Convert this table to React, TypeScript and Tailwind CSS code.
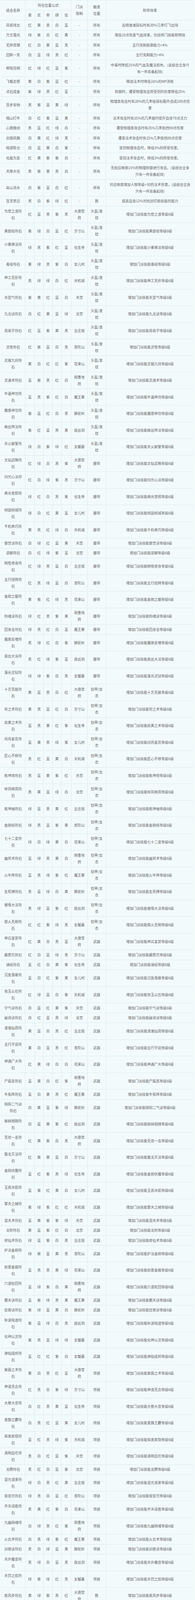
const cell = "border border-[#dcebef] py-[3.75px] text-center align-middle font-normal";
const nameCell = cell + " px-[5px]";
const colorCell = cell + " px-0";
const sectCell = cell + " px-[5px]";
const effectCell = cell + " px-2";

type Row = { name: string; colors: string; sect: string; pos: string; effect: string };

// 通用组合：[名称, 五个位置, 触发位置, 效果]
const basic: [string, string, string, string][] = [
  ["风卷残云", "红黄黑白蓝", "所有", "击倒鬼魂目标时有20%几率打飞出场"],
  ["万丈霞光", "绿紫白红黄", "所有", "增加10点恢复气血效果，包括师门技能和特技"],
  ["无所畏惧", "红白黄蓝黑", "所有", "五行克制抵御能力+4%"],
  ["回眸一笑", "白蓝绿黑红", "所有", "五行克制能力+4%"],
  ["柳暗花明", "红绿红蓝紫", "所有", "中毒时降低25%的气血及魔法损失。(该组合全身只有一件装备起效)"],
  ["飞檐走壁", "黄白紫蓝红", "所有", "释放法术时降低16%的MP消耗"],
  ["点石成金", "紫绿黑红蓝", "所有", "防御时，遭受物理攻击所受到的伤害降低25%"],
  ["百步穿杨", "黑紫蓝黄绿", "所有", "物理类攻击时有20%的几率给目标额外造成100点伤害"],
  ["隔山打牛", "白红紫蓝黄", "所有", "法术攻击时有25%的几率临时提升自身70点灵力"],
  ["心随我动", "黑蓝红绿白", "所有", "遭受物理类攻击时有25%几率抵挡90点伤害"],
  ["云随风舞", "白黄红绿黑", "所有", "遭受法术攻击时有25%几率抵挡80点伤害"],
  ["暗渡陈仓", "白蓝黄白紫", "所有", "受到物理攻击时，降低3%的所受伤害。"],
  ["化敌为友", "红黄紫紫白", "所有", "受到法术攻击时，降低3%的所受伤害。"],
  ["天降大任", "黑紫黄黑白", "所有", "无视召唤兽15%的物理防御进行攻击。(该组合全身只有一件装备起效)"],
  ["高山流水", "白紫蓝白红", "所有", "对召唤兽增加人物等级+30的法术伤害。(该组合全身只有一件装备起效)"],
  ["百无禁忌", "黑白紫绿红", "靴", "提高自身12%对抗封印类技能的能力"],
];

// 门派符石：按触发位置分组，"技能 五色 门派"
const groups: { pos: string; list: string[] }[] = [
  {
    pos: "头盔/发钗",
    list: [
      "为官之道 红蓝黑紫黑 大唐官府",
      "黄庭经 紫绿白蓝红 方寸山",
      "小乘佛法 绿黑紫红蓝 化生寺",
      "毒经 黄绿黑紫白 女儿村",
      "神工无形 黑绿绿白红 天机城",
      "天罡气 紫黄红蓝白 天宫",
      "九龙诀 白红黄蓝绿 龙宫",
      "周易学 红蓝紫黄黑 五庄观",
      "灵性 红紫蓝白黑 普陀山",
      "灵猴九窍 黄白红红紫 花果山",
      "灵通术 蓝紫黑红白 阴曹地府",
      "牛逼神功 蓝黑紫红白 魔王寨",
      "魔兽神功 紫蓝红白黑 狮驼岭",
      "蛛丝阵法 紫红蓝黑黄 盘丝洞",
      "天火献誓 绿白紫绿红 女魃墓",
    ],
  },
  {
    pos: "腰带",
    list: [
      "文韬武略 红绿白黑紫 大唐官府",
      "归元心法 红白绿紫黑 方寸山",
      "佛光普照 绿红白黑紫 化生寺",
      "倾国倾城 绿白红黄蓝 女儿村",
      "千机奇巧 黄黑红绿白 天机城",
      "傲世诀 白绿红蓝黄 天宫",
      "逆鳞 白红绿紫蓝 龙宫",
      "明性修身 红绿黑蓝白 五庄观",
      "五行扭转 红黑绿蓝白 普陀山",
      "金刚之躯 黄紫红绿黑 花果山",
      "拘魂诀 绿红黑紫黄 阴曹地府",
      "回身击 绿黑红白蓝 魔王寨",
      "魔兽反嗜 黑绿红白紫 狮驼岭",
      "盘丝大法 黑红绿紫蓝 盘丝洞",
      "藻光灵狱 绿绿紫白黑 女魃墓",
    ],
  },
  {
    pos: "铠甲/女衣",
    list: [
      "十方无敌 黄蓝黑白红 大唐官府",
      "符之术 黄黑蓝红白 方寸山",
      "歧黄之术 蓝黑黄红紫 化生寺",
      "闭月羞花 蓝黄黑绿紫 女儿村",
      "匠心不移 黑红蓝黄白 天机城",
      "乾坤塔 黑蓝黄紫红 天宫",
      "呼风唤雨 黑黄蓝绿白 龙宫",
      "乾坤袖 绿蓝黑黄红 五庄观",
      "金刚经 绿黑蓝紫黄 普陀山",
      "七十二变 绿白绿黄白 花果山",
      "幽冥术 蓝绿黑黄白 阴曹地府",
      "火牛阵 蓝黑绿紫红 魔王寨",
      "生死搏 黑蓝绿白黄 狮驼岭",
      "催情大法 黑绿蓝紫红 盘丝洞",
      "煌火无明 红红紫绿黑 女魃墓",
    ],
  },
  {
    pos: "武器",
    list: [
      "神兵鉴赏 红黄白黑蓝 大唐官府",
      "霹雳咒 红白蓝绿黑 方寸山",
      "诵经 蓝红白黄紫 化生寺",
      "沉鱼落雁 蓝白红紫黄 女儿村",
      "攻玉以石 红绿蓝白紫 天机城",
      "宁气诀 白蓝红黄紫 天宫",
      "破浪诀 白红蓝黑绿 龙宫",
      "潇湘仙雨 黄蓝白黑红 五庄观",
      "五行学说 黄白蓝黑红 普陀山",
      "神通广大 红黄绿白白 花果山",
      "尸腐恶 蓝黄白红紫 阴曹地府",
      "牛虱阵 蓝白黄黑红 魔王寨",
      "阴阳二气诀 白黄蓝紫绿 狮驼岭",
      "姊妹相随 白蓝黄紫红 盘丝洞",
      "无双一击 红黄紫白黑 大唐官府",
      "磐龙灭法 红紫黄蓝白 方寸山",
      "金刚伏魔 蓝红紫黑绿 化生寺",
      "玉质冰肌 蓝紫红黄白 女儿村",
      "擎天之械 紫绿紫红红 天机城",
      "混天术 蓝黄紫紫绿 天宫",
      "龙附 黄蓝紫红白 龙宫",
      "修仙术 绿蓝紫白黑 五庄观",
      "护法金刚 绿紫蓝黄黑 普陀山",
      "如意金箍 蓝黑黑黄绿 花果山",
      "六道轮回 蓝绿紫白黄 阴曹地府",
      "震天诀 蓝紫绿黑黄 魔王寨",
      "狂兽诀 紫绿蓝黄白 狮驼岭",
      "秋波暗送 紫蓝绿白黑 盘丝洞",
      "化神以灵 紫黑蓝绿绿 女魃墓",
      "弹指成烬 蓝红红紫白 女魃墓",
    ],
  },
  {
    pos: "项链",
    list: [
      "紫薇之术 黄白黑红蓝 大唐官府",
      "神道无念 红黑白紫绿 方寸山",
      "大慈大悲 白红黑黄蓝 化生寺",
      "香飘兰麝 白黑红蓝黄 女儿村",
      "探奥索隐 蓝红黑绿紫 天机城",
      "清明自在 黑白红蓝紫 天宫",
      "龙腾 黑红白蓝紫 龙宫",
      "混元道果 绿白黑红黄 五庄观",
      "观音咒 绿黑白蓝红 普陀山",
      "齐天逞胜 黑黄红紫白 花果山",
      "九幽阴魂 白绿黑红紫 阴曹地府",
      "火云术 白黑绿紫红 魔王寨",
      "训兽诀 黑白绿蓝黄 狮驼岭",
      "天外魔音 黑绿白蓝黑 盘丝洞",
      "天罚之焰 绿紫绿红黑 女魃墓",
    ],
  },
  {
    pos: "靴",
    list: [
      "疾风步 黄绿紫黑红 大唐官府",
      "斜月步 黄紫绿黑白 方寸山",
      "渡世步 绿黄紫蓝黑 化生寺",
      "清歌妙舞 绿紫黄红蓝 女儿村",
      "运思如电 黑白黄黄黑 天机城",
      "云霄步 紫绿黄蓝黑 天宫",
      "游龙术 紫黄绿红黑 龙宫",
      "七星遁 红绿紫白蓝 五庄观",
      "莲花宝座 红紫绿黑蓝 普陀山",
      "腾云驾雾 黑黄黑红黄 花果山",
      "无常步 绿红紫黑黄 阴曹地府",
      "裂石步 绿紫红蓝黄 魔王寨",
      "大鹏展翅 紫绿红白蓝 狮驼岭",
    ],
  },
];

const rows: Row[] = [
  ...basic.map(([name, colors, pos, effect]) => ({ name, colors, sect: "-", pos, effect })),
  ...groups.flatMap((g) =>
    g.list.map((line) => {
      const [skill, colors, sect] = line.split(" ");
      return {
        name: skill + "符石",
        colors,
        sect,
        pos: g.pos,
        effect: "增加门派技能" + skill + "等级6级",
      };
    })
  ),
];

export default function App() {
  return (
    <div className="bg-white font-['Noto_Sans_CJK_SC',sans-serif]">
      <table className="ml-[2px] w-[495px] table-fixed border-collapse bg-[#f3fafc] text-[9px] leading-[17px] text-[#666]">
        <colgroup>
          <col className="w-[62px]" />
          <col className="w-[24px]" />
          <col className="w-[23px]" />
          <col className="w-[23px]" />
          <col className="w-[23px]" />
          <col className="w-[25px]" />
          <col className="w-[42px]" />
          <col className="w-[47px]" />
          <col className="w-[226px]" />
        </colgroup>
        <thead>
          <tr>
            <th rowSpan={2} className={nameCell}>
              组合名称
            </th>
            <th colSpan={5} className={colorCell}>
              符石位置公式
            </th>
            <th rowSpan={2} className={sectCell}>
              门派
              <br />
              限制
            </th>
            <th rowSpan={2} className={sectCell}>
              触发
              <br />
              位置
            </th>
            <th rowSpan={2} className={effectCell}>
              附带效果
            </th>
          </tr>
          <tr>
            {["壹", "贰", "叁", "肆", "伍"].map((n) => (
              <th key={n} className={colorCell}>
                {n}
              </th>
            ))}
          </tr>
        </thead>
        <tbody>
          {rows.map((r) => (
            <tr key={r.name}>
              <td className={nameCell}>{r.name}</td>
              {r.colors.split("").map((c, i) => (
                <td key={i} className={colorCell}>
                  {c}
                </td>
              ))}
              <td className={sectCell}>{r.sect}</td>
              <td className={sectCell}>{r.pos}</td>
              <td className={effectCell}>{r.effect}</td>
            </tr>
          ))}
        </tbody>
      </table>
    </div>
  );
}
